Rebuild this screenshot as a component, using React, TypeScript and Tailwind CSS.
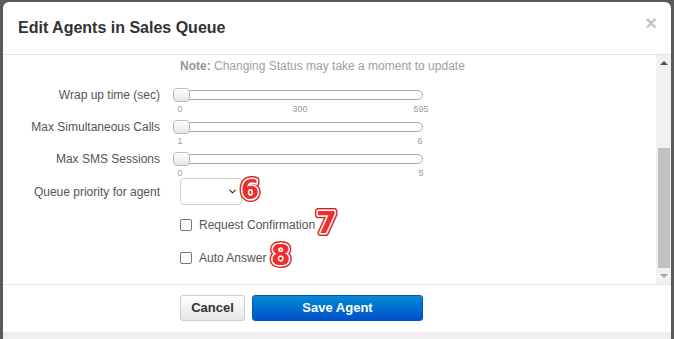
import React from "react";
import { ChevronDown } from "lucide-react";

function Badge({ n, size, w, h, className }: { n: string; size: number; w: number; h: number; className: string }) {
  const y = 3 + size * 0.729;
  const common = {
    x: 3,
    y,
    fontSize: size,
    fontWeight: 700,
    fontFamily: "'DejaVu Sans', sans-serif",
    strokeLinejoin: "round" as const,
  };
  return (
    <svg width={w} height={h} className={`absolute overflow-visible ${className}`}>
      <text {...common} fill="#e02a2a" stroke="#d42424" strokeWidth={6}>{n}</text>
      <text {...common} fill="#e02a2a" stroke="#ffffff" strokeWidth={3}>{n}</text>
      <text {...common} fill="#ee2d2d">{n}</text>
    </svg>
  );
}

function Slider({ ticks }: { ticks: [string, string][] }) {
  return (
    <div className="w-[250px] shrink-0">
      <div className="relative flex h-[14px] items-center">
        <div className="h-[10px] w-full rounded-[5px] border border-[#a8a8a8] bg-white" />
        <div className="absolute left-0 top-0 h-[14px] w-[17px] rounded-[4px] border border-[#bdbdbd] bg-gradient-to-b from-white to-[#e6e6e6]" />
      </div>
      <div className="relative mt-[2px] h-[10px] text-[9px] leading-[10px] text-[#999]">
        {ticks.map(([t, cls]) => (
          <span key={t} className={`absolute -translate-x-1/2 ${cls}`}>
            {t}
          </span>
        ))}
      </div>
    </div>
  );
}

function SliderRow({ label, ticks }: { label: string; ticks: [string, string][] }) {
  return (
    <div className="flex items-start">
      <div className="w-[157px] shrink-0 text-right text-[12px] leading-[14px] text-[#555]">{label}</div>
      <div className="ml-[13px] shrink-0">
        <Slider ticks={ticks} />
      </div>
    </div>
  );
}

function CheckRow({ label, className }: { label: string; className: string }) {
  return (
    <div className={`flex h-[20px] items-center pl-[177px] ${className}`}>
      <div className="h-[12px] w-[12px] rounded-[2px] border border-[#767676] bg-white" />
      <span className="ml-[7px] text-[12px] leading-[14px] text-[#555]">{label}</span>
    </div>
  );
}

export default function App() {
  return (
    <div className="h-[339px] w-[674px] overflow-hidden bg-[#5a5a5a] pl-[3px] pr-[3px] pt-[2px] font-['Liberation_Sans',Arial,sans-serif]">
      <div className="flex h-[337px] flex-col overflow-hidden rounded-t-[6px] bg-white">
        {/* header */}
        <div className="relative flex h-[53px] shrink-0 items-center border-b border-[#e5e5e5] pl-[15px]">
          <h1 className="text-[16px] font-bold leading-[20px] text-[#333]">Edit Agents in Sales Queue</h1>
          <span className="absolute right-[14px] top-[11px] text-[20px] font-bold leading-[20px] text-[#c4c4c4]">×</span>
        </div>
        {/* body */}
        <div className="flex h-[229px] shrink-0">
          <div className="relative flex-1 pt-[4px]">
            <p className="ml-[177px] text-[12px] leading-[14px] text-[#a0a0a0]">
              <b className="text-[#959595]">Note:</b> Changing Status may take a moment to update
            </p>
            <div className="mt-[15px] flex flex-col gap-[6px]">
              <SliderRow
                label="Wrap up time (sec)"
                ticks={[
                  ["0", "left-[7px]"],
                  ["300", "left-[127px]"],
                  ["595", "left-[248px]"],
                ]}
              />
              <SliderRow
                label="Max Simultaneous Calls"
                ticks={[
                  ["1", "left-[7px]"],
                  ["6", "left-[247px]"],
                ]}
              />
              <SliderRow
                label="Max SMS Sessions"
                ticks={[
                  ["0", "left-[7px]"],
                  ["5", "left-[248px]"],
                ]}
              />
            </div>
            <div className="flex h-[27px] items-center">
              <div className="w-[157px] shrink-0 text-right text-[12px] leading-[14px] text-[#555]">Queue priority for agent</div>
              <div className="ml-[20px] flex h-[27px] w-[62px] items-center justify-end rounded-[4px] border border-[#d0d0d0] bg-white pr-[3px]">
                <ChevronDown size={11} strokeWidth={2.6} className="text-[#333]" />
              </div>
            </div>
            <CheckRow label="Request Confirmation" className="mt-[10px]" />
            <CheckRow label="Auto Answer" className="mt-[13px]" />

            <Badge n="6" size={26} w={24} h={28} className="left-[235px] top-[122px]" />
            <Badge n="7" size={30} w={26} h={32} className="left-[310px] top-[153px]" />
            <Badge n="8" size={28} w={26} h={30} className="left-[265px] top-[187px]" />
          </div>
          {/* scrollbar */}
          <div className="flex w-[15px] flex-col items-center bg-[#f1f1f1]">
            <div className="flex h-[16px] w-full items-center justify-center">
              <div className="h-0 w-0 border-x-[4px] border-b-[4px] border-x-transparent border-b-[#505050]" />
            </div>
            <div className="ml-[2px] mt-[77px] h-[120px] w-[12px] self-start bg-[#c1c1c1]" />
            <div className="flex w-full flex-1 items-center justify-center">
              <div className="h-0 w-0 border-x-[4px] border-t-[4px] border-x-transparent border-t-[#a3a3a3]" />
            </div>
          </div>
        </div>
        {/* footer */}
        <div className="flex h-[48px] shrink-0 items-start gap-[7px] border-t border-[#e5e5e5] pl-[177px] pt-[10px]">
          <button className="h-[26px] w-[65px] rounded-[3px] border border-[#cccccc] bg-gradient-to-b from-white to-[#e6e6e6] text-[13px] font-bold text-[#333]">
            Cancel
          </button>
          <button className="h-[26px] w-[171px] rounded-[3px] border border-[#0058c6] bg-gradient-to-b from-[#0a8ad6] to-[#0050c8] text-[13px] font-bold text-white">
            Save Agent
          </button>
        </div>
        <div className="flex-1 bg-[#efefef]" />
      </div>
    </div>
  );
}
